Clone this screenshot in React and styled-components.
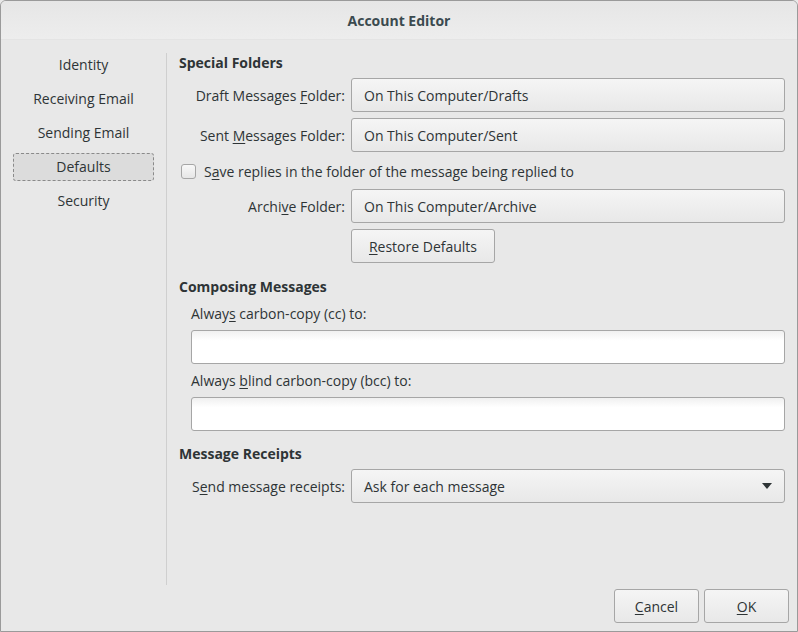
import React from 'react'
import styled, { createGlobalStyle } from 'styled-components'

const Global = createGlobalStyle`
  html, body { margin: 0; padding: 0; background: #e8e8e8; }
  body {
    font-family: "Open Sans", "DejaVu Sans", sans-serif;
    font-size: 14px;
    color: #2e3436;
  }
`

const Window = styled.div`
  box-sizing: border-box;
  width: 798px;
  height: 632px;
  border: 1px solid #9a9a9a;
  border-radius: 6px 6px 0 0;
  background: #e8e8e8;
  display: flex;
  flex-direction: column;
  overflow: hidden;
`

const TitleBar = styled.header`
  height: 38px;
  flex: none;
  display: flex;
  align-items: center;
  justify-content: center;
  font-weight: 700;
  font-size: 14px;
  color: #3b4a4f;
  background: linear-gradient(#e6e6e6, #ededed);
  border-bottom: 1px solid #e4e4e4;
`

const Body = styled.div`
  flex: 1;
  display: flex;
  padding-top: 13px;
`

const Sidebar = styled.nav`
  width: 165px;
  flex: none;
  height: 532px;
  border-right: 1px solid #cfcfcf;
  display: flex;
  flex-direction: column;
  align-items: center;
`

const NavList = styled.div`
  display: flex;
  flex-direction: column;
  gap: 6px;
  margin-top: -2px;
`

const NavItem = styled.div`
  box-sizing: border-box;
  width: 141px;
  height: 28px;
  padding-bottom: 2px;
  display: flex;
  align-items: center;
  justify-content: center;
  border-radius: 3px;
  border: 1px ${p => (p.$active ? 'dashed #8a8a8a' : 'solid transparent')};
  background: ${p => (p.$active ? '#dcdcdc' : 'transparent')};
`

const Content = styled.main`
  flex: 1;
  padding: 0 12px 0 12px;
  display: flex;
  flex-direction: column;
`

const SectionTitle = styled.div`
  font-weight: 700;
  height: 20px;
  line-height: 20px;
  margin-top: ${p => p.$top || 0}px;
  margin-bottom: ${p => p.$bottom || 6}px;
`

const FormRow = styled.div`
  display: flex;
  align-items: center;
  height: 34px;
  margin-bottom: ${p => p.$gap ?? 6}px;
`

const RowLabel = styled.label`
  width: 172px;
  flex: none;
  text-align: right;
  padding-right: 6px;
  box-sizing: border-box;
  white-space: nowrap;
`

const U = styled.span`
  text-decoration: underline;
  text-underline-offset: 2px;
`

const FolderButton = styled.div`
  box-sizing: border-box;
  flex: 1;
  height: 34px;
  display: flex;
  align-items: center;
  justify-content: space-between;
  padding: 0 12px;
  border: 1px solid #a6a6a6;
  border-radius: 3px;
  background: linear-gradient(#f5f5f5, #e8e8e8);
  white-space: nowrap;
`

const PlainButton = styled(FolderButton)`
  flex: none;
  width: ${p => p.$w}px;
  justify-content: center;
`

const CheckRow = styled.label`
  display: flex;
  align-items: center;
  gap: 8px;
  height: 24px;
  margin: 7px 0 6px 2px;
`

const Box = styled.span`
  box-sizing: border-box;
  width: 15px;
  height: 15px;
  border: 1px solid #a6a6a6;
  border-radius: 3px;
  background: linear-gradient(#f8f8f8, #e6e6e6);
`

const FieldLabel = styled.div`
  padding-left: 12px;
  height: 20px;
  line-height: 20px;
  margin-bottom: 6px;
`

const TextBox = styled.div`
  box-sizing: border-box;
  margin-left: 12px;
  height: 34px;
  border: 1px solid #a6a6a6;
  border-radius: 3px;
  background: linear-gradient(#f0f0f0, #ffffff 30%);
  margin-bottom: ${p => p.$gap ?? 6}px;
`

const Arrow = styled.svg`
  width: 10px;
  height: 6px;
  fill: #2e3436;
`

const Footer = styled.footer`
  flex: none;
  height: 42px;
  display: flex;
  justify-content: flex-end;
  align-items: flex-start;
  gap: 5px;
  padding-right: 8px;
`

const FooterButton = styled(PlainButton)`
  width: 85px;
`

export default function App() {
  return (
    <>
      <Global />
      <Window>
        <TitleBar>Account Editor</TitleBar>
        <Body>
          <Sidebar>
            <NavList>
              <NavItem>Identity</NavItem>
              <NavItem>Receiving Email</NavItem>
              <NavItem>Sending Email</NavItem>
              <NavItem $active>Defaults</NavItem>
              <NavItem>Security</NavItem>
            </NavList>
          </Sidebar>
          <Content>
            <SectionTitle $bottom={5}>Special Folders</SectionTitle>
            <FormRow>
              <RowLabel>Draft Messages <U>F</U>older:</RowLabel>
              <FolderButton>On This Computer/Drafts</FolderButton>
            </FormRow>
            <FormRow $gap={0}>
              <RowLabel><span>Sent </span><U>M</U>essages Folder:</RowLabel>
              <FolderButton>On This Computer/Sent</FolderButton>
            </FormRow>
            <CheckRow>
              <Box />
              <span>S<U>a</U>ve replies in the folder of the message being replied to</span>
            </CheckRow>
            <FormRow>
              <RowLabel>Archi<U>v</U>e Folder:</RowLabel>
              <FolderButton>On This Computer/Archive</FolderButton>
            </FormRow>
            <FormRow>
              <RowLabel />
              <PlainButton $w={144}><span><U>R</U>estore Defaults</span></PlainButton>
            </FormRow>
            <SectionTitle $top={8} $bottom={7}>Composing Messages</SectionTitle>
            <FieldLabel>Alway<U>s</U> carbon-copy (cc) to:</FieldLabel>
            <TextBox $gap={7} />
            <FieldLabel>Always <U>b</U>lind carbon-copy (bcc) to:</FieldLabel>
            <TextBox $gap={13} />
            <SectionTitle $bottom={5}>Message Receipts</SectionTitle>
            <FormRow>
              <RowLabel>S<U>e</U>nd message receipts:</RowLabel>
              <FolderButton>
                <span>Ask for each message</span>
                <Arrow viewBox="0 0 10 6"><path d="M0 0h10L5 6z" /></Arrow>
              </FolderButton>
            </FormRow>
          </Content>
        </Body>
        <Footer>
          <FooterButton><span><U>C</U>ancel</span></FooterButton>
          <FooterButton><span><U>O</U>K</span></FooterButton>
        </Footer>
      </Window>
    </>
  )
}
